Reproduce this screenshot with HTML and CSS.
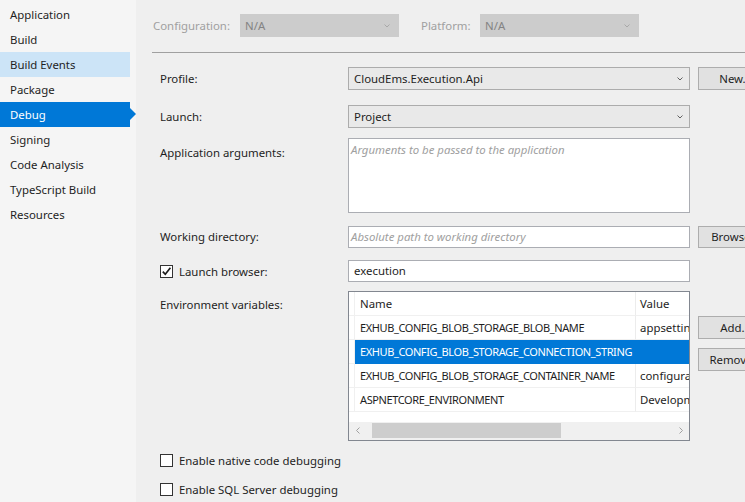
FILE: index.html
```html
<!DOCTYPE html>
<html lang="en">
<head>
<meta charset="utf-8">
<title>Debug</title>
<link rel="stylesheet" href="styles.css">
</head>
<body>
<div class="page">
  <nav class="sidebar">
    <div class="nav-item">Application</div>
    <div class="nav-item">Build</div>
    <div class="nav-item hover">Build Events</div>
    <div class="nav-item">Package</div>
    <div class="nav-item active">Debug</div>
    <div class="nav-item">Signing</div>
    <div class="nav-item">Code Analysis</div>
    <div class="nav-item">TypeScript Build</div>
    <div class="nav-item">Resources</div>
  </nav>
  <main class="main">
    <div class="topbar">
      <span class="top-label config">Configuration:</span>
      <div class="select-disabled"><span>N/A</span><svg class="chev" width="6" height="4" viewBox="0 0 6 4"><path d="M0.5 0.5 L3 3 L5.5 0.5" fill="none" stroke="#a8a8a8"/></svg></div>
      <span class="top-label platform">Platform:</span>
      <div class="select-disabled"><span>N/A</span><svg class="chev" width="6" height="4" viewBox="0 0 6 4"><path d="M0.5 0.5 L3 3 L5.5 0.5" fill="none" stroke="#a8a8a8"/></svg></div>
    </div>
    <div class="form">
      <div class="row row-profile">
        <div class="label">Profile:</div>
        <div class="combo"><span>CloudEms.Execution.Api</span><svg class="chev" width="6" height="4" viewBox="0 0 6 4"><path d="M0.5 0.5 L3 3 L5.5 0.5" fill="none" stroke="#606060"/></svg></div>
        <div class="btn">New...</div>
      </div>
      <div class="row row-launch">
        <div class="label">Launch:</div>
        <div class="combo"><span>Project</span><svg class="chev" width="6" height="4" viewBox="0 0 6 4"><path d="M0.5 0.5 L3 3 L5.5 0.5" fill="none" stroke="#606060"/></svg></div>
      </div>
      <div class="row row-args">
        <div class="label label-args">Application arguments:</div>
        <div class="textarea"><span class="placeholder">Arguments to be passed to the application</span></div>
      </div>
      <div class="row row-wd">
        <div class="label label-input">Working directory:</div>
        <div class="input"><span class="placeholder">Absolute path to working directory</span></div>
        <div class="btn btn-short">Browse...</div>
      </div>
      <div class="row row-lb">
        <div class="label label-check">
          <span class="checkbox"><svg width="11" height="11" viewBox="0 0 11 11"><path d="M1.8 5.6 L4.3 8.3 L9.4 1.8" fill="none" stroke="#1e1e1e" stroke-width="1.7"/></svg></span>
          <span>Launch browser:</span>
        </div>
        <div class="input input-value">execution</div>
      </div>
      <div class="row row-env">
        <div class="label label-env">Environment variables:</div>
        <div class="env-table">
          <div class="trow thead">
            <div class="c0"></div>
            <div class="c1">Name</div>
            <div class="c2">Value</div>
          </div>
          <div class="trow">
            <div class="c0"></div>
            <div class="c1">EXHUB_CONFIG_BLOB_STORAGE_BLOB_NAME</div>
            <div class="c2">appsetting</div>
          </div>
          <div class="trow sel">
            <div class="c0"></div>
            <div class="c1">EXHUB_CONFIG_BLOB_STORAGE_CONNECTION_STRING</div>
            <div class="c2"></div>
          </div>
          <div class="trow">
            <div class="c0"></div>
            <div class="c1">EXHUB_CONFIG_BLOB_STORAGE_CONTAINER_NAME</div>
            <div class="c2">configurat</div>
          </div>
          <div class="trow">
            <div class="c0"></div>
            <div class="c1">ASPNETCORE_ENVIRONMENT</div>
            <div class="c2">Developm</div>
          </div>
          <div class="filler"></div>
          <div class="hscroll">
            <span class="arrow"><svg width="4" height="7" viewBox="0 0 4 7"><path d="M3.5 0.5 L0.5 3.5 L3.5 6.5" fill="none" stroke="#a0a0a0"/></svg></span>
            <span class="thumb"></span>
            <span class="track-rest"></span>
            <span class="arrow"><svg width="4" height="7" viewBox="0 0 4 7"><path d="M0.5 0.5 L3.5 3.5 L0.5 6.5" fill="none" stroke="#a0a0a0"/></svg></span>
          </div>
        </div>
        <div class="btn-col">
          <div class="btn">Add...</div>
          <div class="btn">Remove...</div>
        </div>
      </div>
      <div class="check-row row-native">
        <span class="checkbox"></span>
        <span>Enable native code debugging</span>
      </div>
      <div class="check-row row-sql">
        <span class="checkbox"></span>
        <span>Enable SQL Server debugging</span>
      </div>
    </div>
  </main>
</div>
</body>
</html>
```

FILE: styles.css
```css
* { box-sizing: border-box; }
html, body { margin: 0; padding: 0; }
body {
  width: 745px;
  height: 502px;
  overflow: hidden;
  font-family: "Noto Sans", "Segoe UI", sans-serif;
  font-size: 11.4px;
  color: #1e1e1e;
  background: #efefef;
}
.page { display: flex; height: 502px; }

/* sidebar */
.sidebar { flex: 0 0 136px; background: #f5f5f5; padding-top: 2px; }
.nav-item {
  position: relative;
  width: 130px;
  height: 25px;
  line-height: 25px;
  padding-left: 10px;
  white-space: nowrap;
}
.nav-item.hover { background: #cce4f7; }
.nav-item.active { background: #0078d7; color: #fff; }
.nav-item.active::after {
  content: "";
  position: absolute;
  left: 130px;
  top: 6px;
  border-left: 6px solid #0078d7;
  border-top: 6.5px solid transparent;
  border-bottom: 6.5px solid transparent;
}

/* main */
.main { flex: 0 0 609px; width: 609px; overflow: hidden; padding-left: 16px; }
.topbar {
  display: flex;
  align-items: flex-start;
  height: 53px;
  padding-top: 14px;
  border-bottom: 1px solid #a0a0a0;
  white-space: nowrap;
}
.top-label { flex: 0 0 auto; color: #a0a0a0; line-height: 23px; }
.top-label.config { width: 88px; padding-left: 1px; }
.top-label.platform { width: 59px; margin-left: 22px; }
.select-disabled {
  flex: 0 0 159px;
  display: flex;
  align-items: center;
  justify-content: space-between;
  height: 23px;
  background: #cccccc;
  border: 1px solid #cccccc;
  color: #838383;
  padding: 0 8px 0 4px;
}

.form { padding-left: 8px; width: 700px; }
.row {
  display: grid;
  grid-template-columns: 188px 342px 100px;
  align-items: start;
  white-space: nowrap;
}
.label { line-height: 23px; }
.row-profile { margin-top: 14px; }
.row-launch { margin-top: 15px; }
.row-args { margin-top: 10px; }
.row-wd { margin-top: 13px; }
.row-lb { margin-top: 12px; }
.row-env { margin-top: 9px; }

.label-args { padding-top: 3px; }
.label-input { line-height: 22px; }
.label-env { padding-top: 2px; }
.label-check { display: flex; align-items: center; gap: 6px; height: 22px; }

.combo {
  display: flex;
  align-items: center;
  justify-content: space-between;
  height: 23px;
  background: #e9e9e9;
  border: 1px solid #acacac;
  padding: 0 6px 0 5px;
}
.btn {
  width: 75px;
  margin-left: 8px;
  height: 23px;
  line-height: 21px;
  text-align: center;
  background: #e1e1e1;
  border: 1px solid #adadad;
}
.btn-short { height: 22px; line-height: 20px; }

.textarea {
  height: 75px;
  background: #fff;
  border: 1px solid #abadb3;
  padding: 3px 2px;
  line-height: 16px;
}
.input {
  height: 22px;
  line-height: 20px;
  background: #fff;
  border: 1px solid #abadb3;
  padding: 0 2px;
}
.input-value { padding-left: 5px; }
.placeholder { font-style: italic; color: #a0a0a0; }

.checkbox {
  flex: 0 0 13px;
  width: 13px;
  height: 13px;
  border: 1px solid #333333;
  background: #fff;
  display: flex;
  align-items: center;
  justify-content: center;
}

/* env table */
.env-table {
  height: 150px;
  border: 1px solid #828790;
  background: #fff;
  display: flex;
  flex-direction: column;
  overflow: hidden;
}
.trow {
  display: flex;
  flex: 0 0 24px;
  height: 24px;
  line-height: 23px;
}
.c0 { flex: 0 0 6px; border-right: 1px solid #f0f0f0; border-bottom: 1px solid #f0f0f0; }
.c1 {
  flex: 0 0 281px;
  padding-left: 5px;
  border-right: 1px solid #ececec;
  border-bottom: 1px solid #f0f0f0;
  overflow: hidden;
  font-size: 11px;
  letter-spacing: -0.4px;
}
.thead .c1, .thead .c2 { font-size: 11.4px; letter-spacing: 0; }
.c2 {
  flex: 1 1 auto;
  min-width: 0;
  padding-left: 4px;
  overflow: hidden;
  border-bottom: 1px solid #f0f0f0;
}
.trow.sel .c1, .trow.sel .c2 { background: #0078d7; color: #fff; border-color: #0078d7; }
.filler { flex: 1 1 auto; }
.hscroll {
  flex: 0 0 18px;
  display: flex;
  align-items: center;
  background: #f0f0f0;
  padding-bottom: 1px;
}
.arrow { flex: 0 0 17px; display: flex; align-items: center; justify-content: center; }
.thumb { flex: 0 0 189px; height: 15px; margin-left: 6px; background: #cdcdcd; }
.track-rest { flex: 1 1 auto; }

.btn-col { display: flex; flex-direction: column; padding-top: 25px; gap: 9px; }

.check-row {
  display: flex;
  align-items: center;
  gap: 6px;
  height: 20px;
  white-space: nowrap;
}
.row-native { margin-top: 9px; }
.row-sql { margin-top: 9px; }
```
